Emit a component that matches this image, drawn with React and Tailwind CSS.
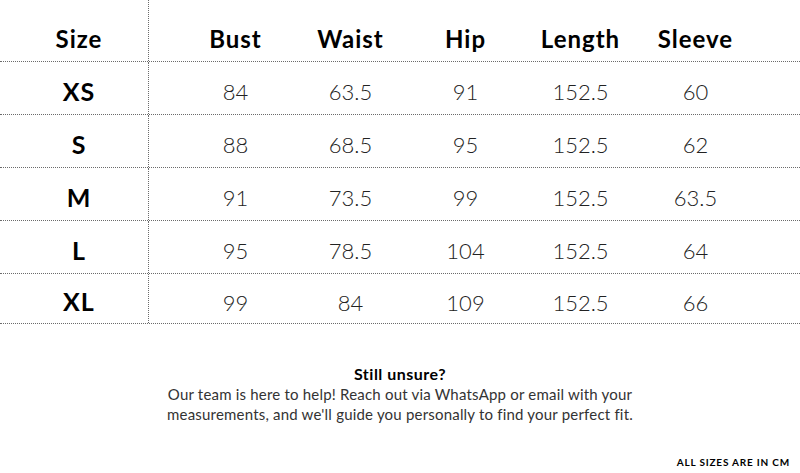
import React from "react";

const headers = ["Bust", "Waist", "Hip", "Length", "Sleeve"];

const rows = [
  { size: "XS", values: ["84", "63.5", "91", "152.5", "60"] },
  { size: "S", values: ["88", "68.5", "95", "152.5", "62"] },
  { size: "M", values: ["91", "73.5", "99", "152.5", "63.5"] },
  { size: "L", values: ["95", "78.5", "104", "152.5", "64"] },
  { size: "XL", values: ["99", "84", "109", "152.5", "66"] },
];

const font = { fontFamily: "Lato, 'Open Sans', sans-serif" };

export default function App() {
  const headerCells = headers.map((h) => (
    <div key={h} className="text-center text-[24px] font-bold tracking-[1px] text-black leading-none">
      {h}
    </div>
  ));

  const bodyRows = rows.map((row, idx) => (
    <div
      key={row.size}
      className={
        "flex border-b border-dotted border-[#6b6b6b] " +
        (idx === rows.length - 1 ? "h-[50px]" : "h-[53px]")
      }
    >
      <div className="w-[149px] shrink-0 border-r border-dotted border-[#6b6b6b] flex items-center justify-center pl-[10px] pt-[6px]">
        <span className="text-[25px] font-bold tracking-[1px] text-black leading-none">{row.size}</span>
      </div>
      <div className="grid grid-cols-[115px_115px_115px_115px_115px] pl-[29px] items-center pt-[8px]">
        {row.values.map((v, i) => (
          <div key={i} className="text-center text-[22px] font-light text-[#222] leading-none">
            {v}
          </div>
        ))}
      </div>
    </div>
  ));

  return (
    <div className="w-[800px] h-[473px] bg-white overflow-hidden flex flex-col" style={font}>
      {/* size table */}
      <div className="flex flex-col">
        <div className="flex h-[62px] border-b border-dotted border-[#6b6b6b]">
          <div className="w-[149px] shrink-0 border-r border-dotted border-[#6b6b6b] flex items-end justify-center pb-[10px] pl-[10px]">
            <span className="text-[24px] font-bold tracking-[1px] text-black leading-none">Size</span>
          </div>
          <div className="grid grid-cols-[115px_115px_115px_115px_115px] pl-[29px] items-end pb-[10px]">
            {headerCells}
          </div>
        </div>
        {bodyRows}
      </div>

      {/* help note */}
      <div className="flex flex-col items-center mt-[39px] text-center">
        <div className="text-[16px] font-bold tracking-[0.5px] text-black leading-[21px]">Still unsure?</div>
        <p className="text-[15px] tracking-[0.2px] text-[#333] leading-[20px] w-[490px]">
          Our team is here to help! Reach out via WhatsApp or email with your measurements, and we'll guide you personally to find your perfect fit.
        </p>
      </div>

      <div className="mt-auto mb-[3px] flex justify-end pr-[10px]">
        <span className="text-[10px] font-bold uppercase tracking-[0.8px] text-black">All sizes are in cm</span>
      </div>
    </div>
  );
}
